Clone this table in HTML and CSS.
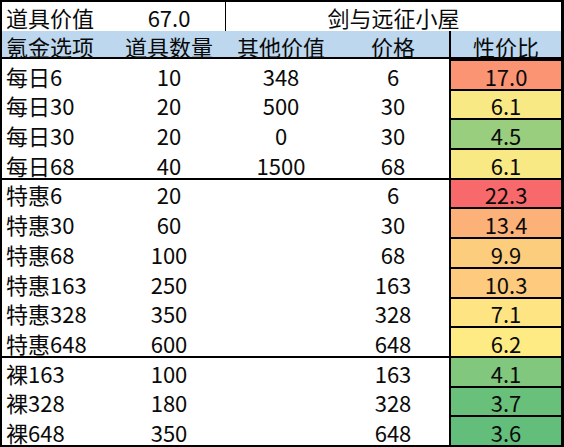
FILE: index.html
```html
<!DOCTYPE html>
<html lang="zh-CN">
<head>
<meta charset="utf-8">
<title>剑与远征小屋</title>
<link rel="stylesheet" href="styles.css">
</head>
<body>
<div class="sheet">
  <div class="row title">
    <div class="c a">道具价值</div>
    <div class="c">67.0</div>
    <div class="c merged">剑与远征小屋</div>
  </div>
  <div class="row head">
    <div class="c a">氪金选项</div>
    <div class="c">道具数量</div>
    <div class="c">其他价值</div>
    <div class="c">价格</div>
    <div class="c e">性价比</div>
  </div>

  <div class="row h30">
    <div class="c a">每日6</div><div class="c">10</div><div class="c">348</div><div class="c">6</div>
    <div class="c e" style="background:#fa9473">17.0</div>
  </div>
  <div class="row h29">
    <div class="c a">每日30</div><div class="c">20</div><div class="c">500</div><div class="c">30</div>
    <div class="c e" style="background:#f9e984">6.1</div>
  </div>
  <div class="row h30">
    <div class="c a">每日30</div><div class="c">20</div><div class="c">0</div><div class="c">30</div>
    <div class="c e" style="background:#99ce7e">4.5</div>
  </div>
  <div class="row h30">
    <div class="c a">每日68</div><div class="c">40</div><div class="c">1500</div><div class="c">68</div>
    <div class="c e" style="background:#f9e984">6.1</div>
  </div>

  <div class="row h29 group">
    <div class="c a">特惠6</div><div class="c">20</div><div class="c"></div><div class="c">6</div>
    <div class="c e" style="background:#f8696b">22.3</div>
  </div>
  <div class="row h30">
    <div class="c a">特惠30</div><div class="c">60</div><div class="c"></div><div class="c">30</div>
    <div class="c e" style="background:#fcb179">13.4</div>
  </div>
  <div class="row h30">
    <div class="c a">特惠68</div><div class="c">100</div><div class="c"></div><div class="c">68</div>
    <div class="c e" style="background:#fdcd7e">9.9</div>
  </div>
  <div class="row h30">
    <div class="c a">特惠163</div><div class="c">250</div><div class="c"></div><div class="c">163</div>
    <div class="c e" style="background:#fdca7e">10.3</div>
  </div>
  <div class="row h29">
    <div class="c a">特惠328</div><div class="c">350</div><div class="c"></div><div class="c">328</div>
    <div class="c e" style="background:#ffe483">7.1</div>
  </div>
  <div class="row h30">
    <div class="c a">特惠648</div><div class="c">600</div><div class="c"></div><div class="c">648</div>
    <div class="c e" style="background:#ffeb84">6.2</div>
  </div>

  <div class="row h30 group">
    <div class="c a">裸163</div><div class="c">100</div><div class="c"></div><div class="c">163</div>
    <div class="c e" style="background:#81c77d">4.1</div>
  </div>
  <div class="row h29">
    <div class="c a">裸328</div><div class="c">180</div><div class="c"></div><div class="c">328</div>
    <div class="c e" style="background:#69c07b">3.7</div>
  </div>
  <div class="row h30">
    <div class="c a">裸648</div><div class="c">350</div><div class="c"></div><div class="c">648</div>
    <div class="c e" style="background:#63be7b">3.6</div>
  </div>
</div>
</body>
</html>
```

FILE: styles.css
```css
html, body {
  margin: 0;
  padding: 0;
  background: #ffffff;
}

.sheet {
  width: 559px;
  border: 2px solid #000;
  border-right-width: 3px;
  font-family: "Noto Sans CJK SC", "Noto Sans", sans-serif;
  font-size: 22px;
  line-height: 22px;
  color: #0a0a0a;
}

.row {
  display: grid;
  grid-template-columns: 111px 112px 112px 112px 112px;
  box-sizing: border-box;
}

.c {
  display: flex;
  align-items: flex-end;
  justify-content: center;
  box-sizing: border-box;
  white-space: nowrap;
  padding-bottom: 2px;
}

.a {
  justify-content: flex-start;
  padding-left: 4px;
}

.title {
  height: 29px;
  grid-template-columns: 111px 112px 336px;
}

.title .c {
  padding-bottom: 3px;
}

.merged {
  border-left: 1px solid #000;
}

.head {
  height: 28px;
  background: #bdd7ee;
  border-bottom: 2px solid #000;
}

.head .c {
  padding-bottom: 0;
}

.e {
  border-left: 2px solid #000;
}

.h30 .e,
.h29 .e {
  border-top: 2px solid #000;
}

.h30 {
  height: 30px;
}

.h29 {
  height: 29px;
}

.group .c {
  border-top: 2px solid #000;
}
```
